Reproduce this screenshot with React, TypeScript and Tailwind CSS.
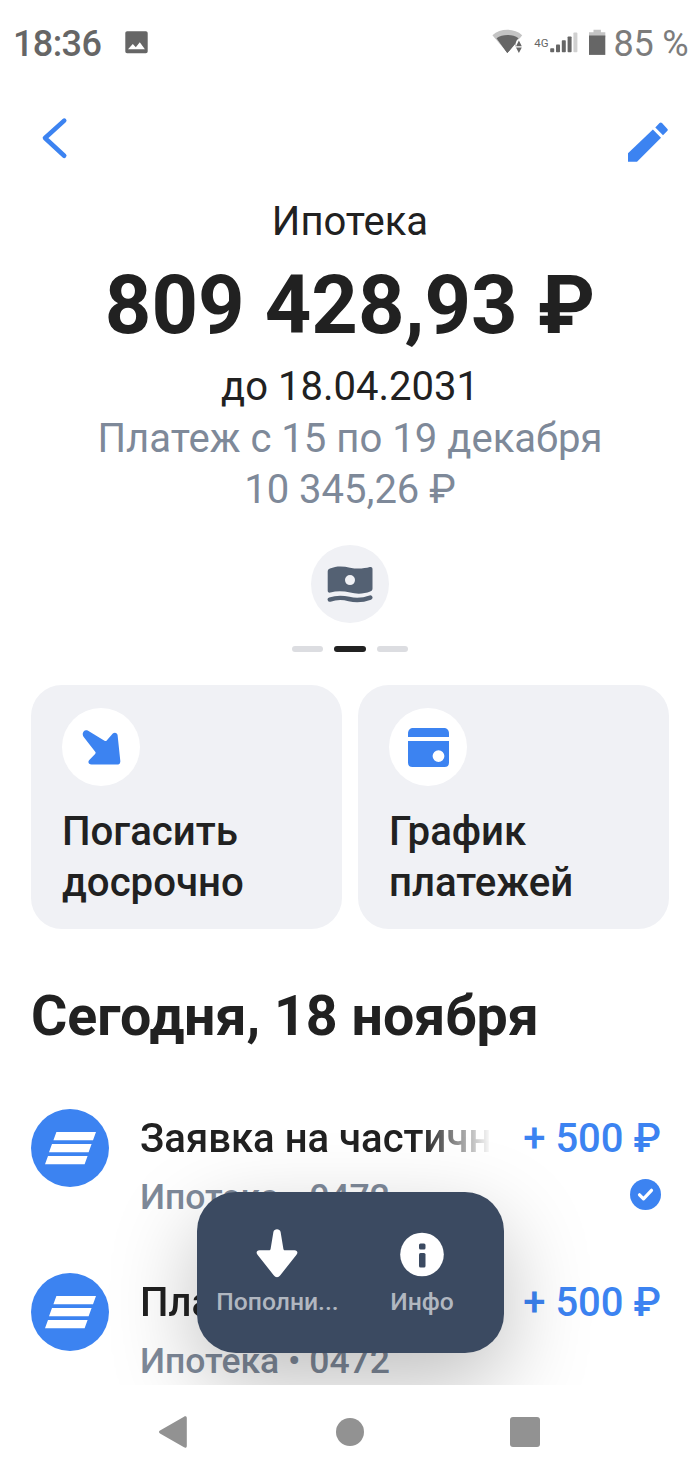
import React from "react";

const operations = [
  { id: 1, title: "Заявка на частичн", account: "Ипотека • 0472", amount: "+ 500 ₽", done: true },
  { id: 2, title: "Платеж", account: "Ипотека • 0472", amount: "+ 500 ₽", done: false },
];

function StatusBar() {
  return (
    <div className="flex h-[86px] items-center pl-[13px] text-[#666666]">
      <span className="mt-[2px] w-[112px] text-[36px] leading-[44px] font-medium tracking-[-0.6px] whitespace-nowrap">18:36</span>
      <svg width="23" height="23" viewBox="0 0 23 23" className="-mt-[2px]">
        <path
          fill="currentColor"
          fillRule="evenodd"
          d="M2.200.3h18.600c1.200 0 1.900.8 1.900 1.900v18.100c0 1.200-.7 1.900-1.900 1.900H2.200c-1.200 0-1.900-.7-1.900-1.900V2.200C.3 1.100 1 .3 2.200.3ZM3 18.300h16.900l-5.100-7.100-4 5.100-3-3.300L3 18.300Z"
        />
      </svg>
      <svg width="124" height="32" viewBox="0 0 124 32" className="-mt-[2px] ml-[340.5px]">
        <path fill="#c4c4c4" d="M3.400 9.200C11.500 2 25 2 33.200 9.200l-3.300 4.300-3-.5L18.300 26.700Z" />
        <path fill="#666" d="M7.500 12.200c6-4.300 16-4.300 22 0L27.300 15v5.100L18.300 27Z" />
        <path fill="#fff" d="M26.500 26V17l4-4.500h3V27h-7Z" />
        <path fill="#666" d="M27 20.300l2.900-5.700 2.900 5.700ZM27 21.400h5.800l-2.900 5.700Z" />
        <path fill="#fff" d="M18.300 27.300l8-9.600v9.600Z" />
        <path fill="#666" d="M18.300 27 9 13.500h17.200v4L18.300 27Z" />
        <rect x="61.200" y="22.200" width="4" height="4" rx=".8" fill="#666" />
        <rect x="67" y="18.400" width="4" height="7.800" rx=".8" fill="#666" />
        <rect x="72.800" y="14.300" width="4" height="11.900" rx=".8" fill="#666" />
        <rect x="78.600" y="10.400" width="4" height="15.800" rx=".8" fill="#666" />
        <rect x="84.400" y="6.600" width="4" height="19.600" rx=".8" fill="#d0d0d0" />
        <text x="45.200" y="20.500" fontSize="11.500" fill="#666">
          4G
        </text>
        <path fill="#c4c4c4" d="M104.500 3.800h7.400v2.400h4.400v5H100v-5h4.500Z" />
        <path fill="#666" d="M100 9.500h16.300v19.400H100Z" />
      </svg>
      <span className="mt-[2px] ml-px text-[36px] leading-[44px] tracking-[-0.2px] whitespace-nowrap text-[#7c7c7c]">85 %</span>
    </div>
  );
}

function Header() {
  return (
    <div className="flex h-[110px] justify-between pr-[31px] pl-[41px]">
      <svg width="28" height="42" viewBox="0 0 28 42" className="mt-[31px]">
        <path d="M23.200 3.600 4 21l19.200 17.700" fill="none" stroke="#3c83f1" strokeWidth="4.600" strokeLinecap="round" strokeLinejoin="round" />
      </svg>
      <svg width="41" height="41" viewBox="0 0 41 41" className="mt-[35px]" fill="#3c83f1">
        <path d="M0 32.200 24.900 8.600 33 16.700 9 40.700H0Z" />
        <path d="m27.300 6.400 4.200-4.300c.8-.8 1.700-.8 2.500 0l5.200 5.600c.8.8.8 1.400 0 2.200L35 14.200Z" />
      </svg>
    </div>
  );
}

function Summary() {
  return (
    <div className="flex flex-col items-center text-[40px] leading-[51px] whitespace-nowrap text-[#212121]">
      <div>Ипотека</div>
      <div className="h-[114px] pt-[2px] text-[81.2px] leading-[113px] font-bold">809 428,93 ₽</div>
      <div>до 18.04.2031</div>
      <div className="mt-px text-[40.1px] text-[#7e8999]">Платеж с 15 по 19 декабря</div>
      <div className="text-[#7e8999]">10 345,26 ₽</div>
      <div className="mt-[30px] flex size-[78px] items-center justify-center rounded-full bg-[#f0f1f5]">
        <svg width="46" height="38" viewBox="0 0 46 38" className="mt-[2px]" fill="#546173">
          <path
            fillRule="evenodd"
            d="M.7 5.500C.7 3.800 1.600 3 3 2.500 9-.2 16-.1 23 1.700c7 1.500 14 1 19.800-.6 1.700-.4 2.700.4 2.700 2v19.400c0 1.500-.8 2.500-2.300 3.100-6 2.500-14 2.600-20 1-6.700-1.700-13.700-1.800-19.700-.1C1.700 27 .7 26.200.7 24.500ZM23 9.100a5 5 0 1 0 0 10 5 5 0 0 0 0-10Z"
          />
          <path d="M2.800 33.600C9 31.500 16 31.500 22 33c7 1.700 14 1.200 21.300-1.400" fill="none" stroke="#546173" strokeWidth="4.400" strokeLinecap="round" />
        </svg>
      </div>
      <div className="mt-[23px] flex gap-[11.400px]">
        <span className="h-[6px] w-[31.300px] rounded-full bg-[#dcdde1]" />
        <span className="h-[6px] w-[31.300px] rounded-full bg-[#212121]" />
        <span className="h-[6px] w-[31.300px] rounded-full bg-[#dcdde1]" />
      </div>
    </div>
  );
}

function ActionCard({ icon, lines }: { icon: React.ReactNode; lines: string[] }) {
  return (
    <div className="h-[244px] flex-1 rounded-[31px] bg-[#f0f1f5] px-[31px] pt-[23px]">
      <div className="flex size-[78px] items-center justify-center rounded-full bg-white">{icon}</div>
      <div className="mt-[20px] text-[40.200px] leading-[51px] font-medium whitespace-nowrap text-[#212121]">
        {lines.map((line) => (
          <div key={line}>{line}</div>
        ))}
      </div>
    </div>
  );
}

function RepayIcon() {
  return (
    <svg width="40" height="36" viewBox="0 0 40 36" className="mt-[1px] ml-[2px]" fill="#3c83f1">
      <path d="M5.700.6 22.500 10.700c.8.500 1.600.4 2.200-.2L30.800 3.600c1.700-1.800 4.600-.9 4.800 1.600l2.700 25.600c.2 2.500-1 3.800-3.200 3.800H9.500c-3 0-4-2.800-2.200-4.600l5.800-6.100c.7-.7.7-1.500.1-2.200L1.500 6.700C-.8 3.200 2.200-1.300 5.700.6Z" />
    </svg>
  );
}

function WalletIcon() {
  return (
    <svg width="41" height="39" viewBox="0 0 41 39" className="mt-px ml-px" fill="#3c83f1">
      <path d="M0 5.500C0 2 2 0 5.500 0h30C39 0 41 2 41 5.500V9H0Z" />
      <path fillRule="evenodd" d="M0 13h41v21.500c0 3-1.500 4.500-4.500 4.500h-32C1.500 39 0 37.500 0 34.500ZM30.500 22.200a5.900 5.900 0 1 0 0 11.800 5.900 5.900 0 0 0 0-11.800Z" />
    </svg>
  );
}

function OperationRow({ title, account, amount, done }: (typeof operations)[number]) {
  return (
    <div className="flex h-[164px]">
      <div className="flex size-[78px] shrink-0 items-center justify-center rounded-full bg-[#3c83f1]">
        <svg width="51" height="33" viewBox="0 0 51 33" fill="white">
          <path d="M11.400 0H51l-3 8.200H8.400ZM7 12h39.600l-3 8.200H4ZM3 24h39.600l-3 8.200H0Z" />
        </svg>
      </div>
      <div className="ml-[31px] w-[352px] font-medium whitespace-nowrap">
        <div className="mt-[4px] w-[352px] mask-r-from-[80%] mask-r-to-100% text-[40.100px] leading-[51px] text-[#212121]">{title}</div>
        <div className="mt-[10px] text-[35.500px] leading-[46px] text-[#7e8999]">{account}</div>
      </div>
      <div className="flex flex-1 flex-col items-end pr-[8px]">
        <div className="mt-[4px] text-[40px] leading-[51px] font-medium whitespace-nowrap text-[#3c83f1]">{amount}</div>
        {done && (
          <svg width="31" height="31" viewBox="0 0 31 31" className="mt-[15px]">
            <circle cx="15.500" cy="15.500" r="15.500" fill="#3c83f1" />
            <path d="m9.500 15.800 4 4.100 8-8.600" fill="none" stroke="white" strokeWidth="3.200" strokeLinecap="round" strokeLinejoin="round" />
          </svg>
        )}
      </div>
    </div>
  );
}

function Dock() {
  return (
    <div className="absolute top-[208px] left-[196.500px] flex h-[161px] w-[307px] rounded-[39px] bg-[#3b4a61] px-[8px] pt-[36px] text-[24.700px] leading-[30px] font-medium text-[#b1b7c0] shadow-[0_31px_86px_rgba(0,0,0,0.25)]">
      <div className="flex w-[145px] flex-col items-center">
        <svg width="42" height="50" viewBox="0 0 42 50" fill="white">
          <path d="M17.400 4C18 .4 24 .4 24.600 4l2.800 17c.2 1 .7 1.300 1.500 1.300h9.600c3 0 3.800 2.600 1.800 4.600L24.500 47c-2.500 3-4.500 3-7 0L1.700 26.900c-2-2-1.200-4.600 1.800-4.600h9.600c.8 0 1.300-.3 1.500-1.300Z" />
        </svg>
        <span className="mt-[9px] ml-[1px] whitespace-nowrap">Пополни...</span>
      </div>
      <div className="flex w-[145px] flex-col items-center">
        <svg width="44" height="50" viewBox="0 0 44 50">
          <circle cx="22" cy="26.500" r="21.800" fill="white" />
          <rect x="19" y="15.500" width="6.500" height="6" rx="1.500" fill="#3b4a61" />
          <rect x="19" y="25" width="6.500" height="14.500" rx="1.500" fill="#3b4a61" />
        </svg>
        <span className="mt-[9px] whitespace-nowrap">Инфо</span>
      </div>
    </div>
  );
}

function SystemNav() {
  return (
    <div className="flex h-[93px] items-center bg-white pl-[159px] text-[#929292]">
      <svg width="28" height="32" viewBox="0 0 28 32" fill="currentColor">
        <path d="M1 14.500 25 .8c1.500-.9 2.800-.4 2.800 1.300v27.800c0 1.700-1.300 2.200-2.800 1.300L1 17.500c-1.400-.8-1.400-2.200 0-3Z" />
      </svg>
      <span className="ml-[149px] size-[28px] rounded-full bg-[#929292]" />
      <span className="ml-[146px] size-[30px] rounded-[3px] bg-[#929292]" />
    </div>
  );
}

export default function App() {
  return (
    <div className="h-[1478px] w-[700px] overflow-hidden bg-white font-['Roboto',sans-serif]">
      <StatusBar />
      <Header />
      <Summary />
      <div className="mt-[33px] flex gap-[16px] px-[31px]">
        <ActionCard icon={<RepayIcon />} lines={["Погасить", "досрочно"]} />
        <ActionCard icon={<WalletIcon />} lines={["График", "платежей"]} />
      </div>
      <div className="relative mt-[55px] h-[401px] overflow-hidden">
        <h2 className="ml-[31px] h-[125px] pt-px text-[55.500px] leading-[64px] font-bold whitespace-nowrap text-[#212121]">Сегодня, 18 ноября</h2>
        <div className="px-[31px]">
          {operations.map((op) => (
            <OperationRow key={op.id} {...op} />
          ))}
        </div>
        <Dock />
      </div>
      <SystemNav />
    </div>
  );
}
